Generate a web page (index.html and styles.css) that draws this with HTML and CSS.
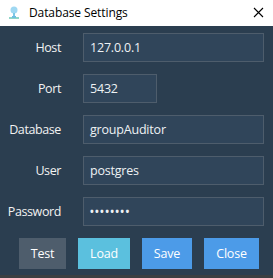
FILE: index.html
```html
<!DOCTYPE html>
<html>
<head>
<meta charset="utf-8">
<link rel="stylesheet" href="styles.css">
</head>
<body>
<div class="window">
  <div class="titlebar">
    <svg class="app-icon" width="16" height="16" viewBox="0 0 16 16">
      <circle cx="8" cy="5" r="3.5" fill="#9fd8f2"/>
      <rect x="7" y="8" width="2" height="4" fill="#7cc7e6"/>
      <rect x="3" y="12" width="10" height="2" fill="#8fd6c8"/>
      <rect x="6" y="11" width="4" height="2" fill="#6fbfe0"/>
    </svg>
    <span class="title">Database Settings</span>
    <svg class="close" width="11" height="11" viewBox="0 0 11 11">
      <path d="M1 1 L10 10 M10 1 L1 10" stroke="#000" stroke-width="1.1"/>
    </svg>
  </div>
  <div class="body">
    <div class="form">
      <label class="label">Host</label>
      <div class="input">127.0.0.1</div>
      <label class="label">Port</label>
      <div class="input short">5432</div>
      <label class="label">Database</label>
      <div class="input">groupAuditor</div>
      <label class="label">User</label>
      <div class="input">postgres</div>
      <label class="label">Password</label>
      <div class="input pw">&bull;&bull;&bull;&bull;&bull;&bull;&bull;&bull;</div>
    </div>
    <div class="buttons">
      <button class="btn test">Test</button>
      <button class="btn load">Load</button>
      <button class="btn save">Save</button>
      <button class="btn close-btn">Close</button>
    </div>
  </div>
  <div class="bottom"></div>
</div>
</body>
</html>
```
FILE: styles.css
```css
html, body {
  margin: 0;
  padding: 0;
}
body {
  width: 273px;
  height: 278px;
  overflow: hidden;
  font-family: "Open Sans", "Noto Sans", sans-serif;
}
.window {
  display: flex;
  flex-direction: column;
  height: 278px;
}
.titlebar {
  height: 26px;
  background: #ffffff;
  display: flex;
  align-items: center;
  padding: 0 9px 0 6px;
  box-sizing: border-box;
}
.app-icon {
  margin-right: 7px;
  margin-top: -1px;
}
.title {
  font-size: 12px;
  letter-spacing: -0.1px;
  color: #000;
  flex: 1;
  margin-top: -1px;
}
.close {
  margin-top: -1px;
}
.body {
  flex: 1;
  background: #2b3e50;
  padding: 7px 9px 0 0;
}
.form {
  display: grid;
  grid-template-columns: 61px 1fr;
  column-gap: 22px;
  row-gap: 12px;
}
.label {
  font-size: 12.5px;
  letter-spacing: -0.4px;
  color: #f2f2f2;
  text-align: right;
  align-self: center;
}
.input {
  height: 29px;
  box-sizing: border-box;
  background: #30455a;
  border: 1px solid #4e5d6c;
  color: #eef2f4;
  font-size: 12.5px;
  letter-spacing: -0.2px;
  line-height: 27px;
  padding-left: 6px;
}
.input.short {
  width: 74px;
}
.input.pw {
  font-size: 10px;
  font-weight: bold;
  letter-spacing: 1.3px;
}
.buttons {
  display: flex;
  gap: 12px;
  padding: 12px 0 0 19px;
}
.btn {
  height: 31px;
  border: none;
  color: #fff;
  font-family: "Open Sans", "Noto Sans", sans-serif;
  font-size: 12.5px;
  letter-spacing: -0.2px;
  padding: 0;
}
.test { width: 47px; background: #4e5d6c; }
.load { width: 52px; background: #5bc0de; }
.save { width: 50px; background: #4c9be8; }
.close-btn { width: 55px; background: #4c9be8; }
.bottom {
  height: 3px;
  background: #3b3f42;
}
```
